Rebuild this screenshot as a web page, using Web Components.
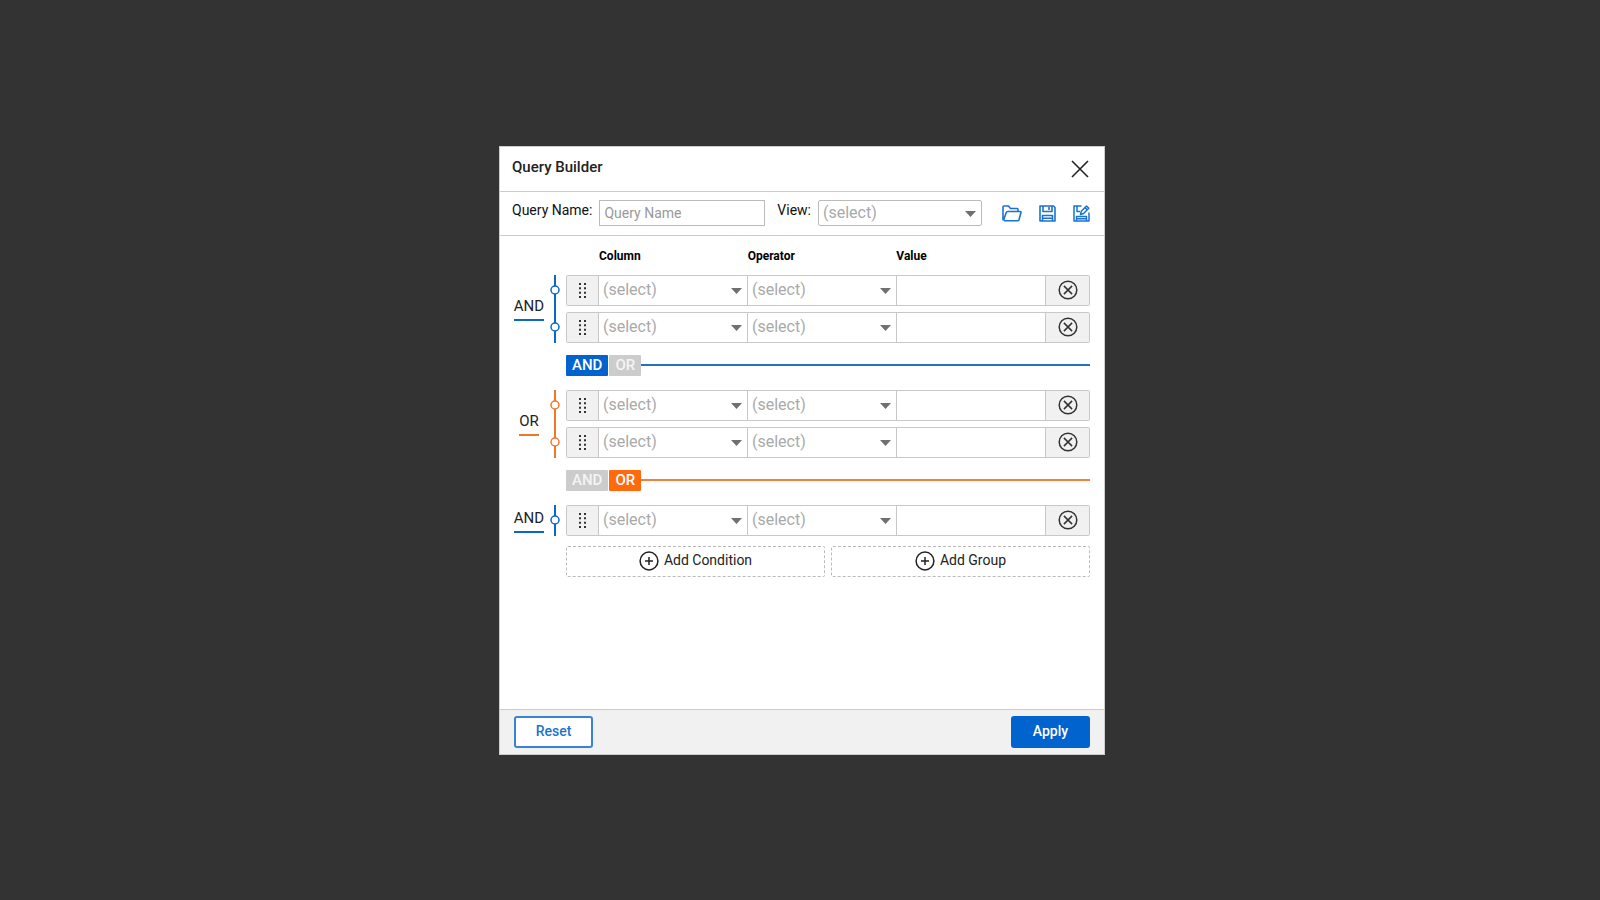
<!DOCTYPE html>
<html lang="en">
<head>
<meta charset="utf-8">
<meta name="viewport" content="width=device-width, initial-scale=1">
<title>Query Builder</title>
<style>
    body {
        margin: 0;
        background: #333;
        color: #222;
        font-family: Roboto, "Liberation Sans", sans-serif;
        font-size: 15px;
        line-height: 20px;
    }
</style>
</head>
<body>
<query-builder></query-builder>

<script>
const ICONS = {
    close: '<svg width="18" height="18" viewBox="0 0 18 18"><path d="M1 1l16 16M17 1L1 17" stroke-width="1.6"/></svg>',
    folder: '<svg width="20" height="17" viewBox="0 0 20 17"><path d="M1.500 15.500Q1 15 1 14.500V2q0-1 1-1h4.500l2 2.500H15q1 0 1 1V6.500M1.500 15.500L4.200 7.500q.4-1 1.400-1H18q1.200 0 .9 1.200L17 14.800q-.3 1-1.300 1H2" stroke-width="1.6"/></svg>',
    save: '<svg width="17" height="17" viewBox="0 0 17 17"><path d="M1 1h13.500L16 2.500V16H1zM4 1v5.500h9V1M10 2v3M3.500 16v-5.500h10V16M3.500 13.300h10" stroke-width="1.6"/></svg>',
    edit: '<svg width="17" height="17" viewBox="0 0 17 17"><path d="M8.500 1H1v15h15V7.500M4 1v5.500h3M3.500 16v-4.500h10V16M3.500 13.700h10M7.500 9.500l.8-3.300L13.500 1l2.300 2.300-5.200 5.200zM12 2.600l2.300 2.300" stroke-width="1.5"/></svg>',
    remove: '<svg width="20" height="20" viewBox="0 0 20 20"><circle cx="10" cy="10" r="8.800"/><path d="M5.900 5.900l8.200 8.200M14.100 5.900l-8.200 8.200"/></svg>',
    add: '<svg width="20" height="20" viewBox="0 0 20 20"><circle cx="10" cy="10" r="8.900"/><path d="M10 6v8M6 10h8"/></svg>',
    grip: '<svg width="7" height="15" viewBox="0 0 7 15"><path d="M1 0v15M6 0v15" stroke-width="2" stroke-dasharray="2 2.330"/></svg>',
    node: '<svg width="10" height="10" viewBox="0 0 10 10"><circle cx="5" cy="5" r="4" fill="#fff"/></svg>'
};

class QbIcon extends HTMLElement {
    constructor() {
        super();
        this.attachShadow({ mode: 'open' });
    }

    connectedCallback() {
        this.shadowRoot.innerHTML = `
            <style>
                :host { display: inline-flex; flex: none; }
                svg { display: block; fill: none; stroke: currentColor; stroke-width: 1.5; stroke-linejoin: round; }
            </style>
            ${ICONS[this.getAttribute('name')] || ''}
        `;
    }
}

class QbSelect extends HTMLElement {
    constructor() {
        super();
        this.attachShadow({ mode: 'open' });
    }

    connectedCallback() {
        const label = this.getAttribute('label');
        this.shadowRoot.innerHTML = `
            <style>
                :host {
                    display: grid;
                    grid-template-columns: 1fr 20px;
                    align-items: center;
                    min-width: 0;
                    box-sizing: border-box;
                }

                select {
                    grid-area: 1 / 1 / 2 / 3;
                    appearance: none;
                    width: 100%;
                    height: 100%;
                    margin: 0;
                    padding: 0 20px 0 4px;
                    border: none;
                    background: transparent;
                    color: #aaa;
                    font: inherit;
                    font-size: 16px;
                }

                svg {
                    grid-area: 1 / 2;
                    fill: #707070;
                    pointer-events: none;
                    margin-left: 4px;
                    margin-top: 2px;
                }
            </style>
            <select aria-label="${label}"><option>(select)</option></select>
            <svg width="11" height="6" viewBox="0 0 11 6"><path d="M0 0h11L5.500 6z"/></svg>
        `;
    }
}

class QbCondition extends HTMLElement {
    constructor() {
        super();
        this.attachShadow({ mode: 'open' });
    }

    connectedCallback() {
        this.shadowRoot.innerHTML = `
            <style>
                :host {
                    display: grid;
                    grid-template-columns: 31px 1fr 1fr 1fr 44px;
                    height: 31px;
                    box-sizing: border-box;
                    border: 1px solid #c8c8c8;
                    border-radius: 2px;
                    color: #333;
                }

                button {
                    display: grid;
                    place-items: center;
                    margin: 0;
                    padding: 0;
                    border: none;
                    background: #f1f1f1;
                    color: inherit;
                    cursor: pointer;
                }

                qb-select, input, .remove {
                    border: none;
                    border-left: 1px solid #c8c8c8;
                }

                input {
                    min-width: 0;
                    margin: 0;
                    padding: 0 4px;
                    font: inherit;
                }
            </style>
            <button class="grip" aria-label="Move condition"><qb-icon name="grip"></qb-icon></button>
            <qb-select label="Column"></qb-select>
            <qb-select label="Operator"></qb-select>
            <input type="text" aria-label="Value">
            <button class="remove" aria-label="Remove condition"><qb-icon name="remove"></qb-icon></button>
        `;

        this.shadowRoot.querySelector('.remove').addEventListener('click', () => this.remove());
    }
}

class QbGroup extends HTMLElement {
    constructor() {
        super();
        this.attachShadow({ mode: 'open' });
    }

    connectedCallback() {
        const nodes = '<qb-icon name="node"></qb-icon>'.repeat(this.children.length);
        this.shadowRoot.innerHTML = `
            <style>
                :host {
                    --tone: #0b68c8;
                    display: grid;
                    grid-template-columns: 30px 22px 1fr;
                }

                :host([type="OR"]) {
                    --tone: #f0772b;
                }

                .name {
                    place-self: center;
                    padding-bottom: 3px;
                    border-bottom: 2px solid var(--tone);
                }

                .rail, .rows {
                    display: flex;
                    flex-direction: column;
                    gap: 6px;
                }

                .rail {
                    align-items: center;
                    background: linear-gradient(var(--tone), var(--tone)) center / 2px 100% no-repeat;
                    color: var(--tone);
                }

                .rail qb-icon {
                    height: 31px;
                    align-items: center;
                }
            </style>
            <span class="name">${this.getAttribute('type')}</span>
            <div class="rail">${nodes}</div>
            <div class="rows"><slot></slot></div>
        `;
    }
}

class QbJoin extends HTMLElement {
    constructor() {
        super();
        this.attachShadow({ mode: 'open' });
    }

    connectedCallback() {
        this.shadowRoot.innerHTML = `
            <style>
                :host {
                    --tone: #0063ce;
                    --line: #2272bd;
                    display: flex;
                    align-items: center;
                    margin: 12px 0 14px 52px;
                }

                :host([value="OR"]) {
                    --tone: #ff6a0c;
                    --line: #f0813c;
                }

                button {
                    height: 21px;
                    margin: 0 1px 0 0;
                    padding: 0 6px;
                    border: none;
                    border-radius: 1px;
                    background: #ccc;
                    color: #f4f4f4;
                    font: inherit;
                    font-weight: 500;
                    line-height: 20px;
                    cursor: pointer;
                }

                button:last-of-type {
                    margin-right: 0;
                }

                button[aria-pressed="true"] {
                    background: var(--tone);
                    color: #fff;
                }

                hr {
                    flex: 1;
                    height: 2px;
                    margin: 0;
                    border: none;
                    background: var(--line);
                }
            </style>
            <button>AND</button>
            <button>OR</button>
            <hr>
        `;

        this.shadowRoot.querySelectorAll('button').forEach(button => {
            button.addEventListener('click', () => {
                this.setAttribute('value', button.textContent);
                this.update();
            });
        });
        this.update();
    }

    update() {
        this.shadowRoot.querySelectorAll('button').forEach(button => {
            button.setAttribute('aria-pressed', button.textContent === this.getAttribute('value'));
        });
    }
}

class QueryBuilder extends HTMLElement {
    constructor() {
        super();
        this.attachShadow({ mode: 'open' });
    }

    connectedCallback() {
        this.shadowRoot.innerHTML = `
            <style>
                :host {
                    display: grid;
                    place-items: center;
                    min-height: 100vh;
                    box-sizing: border-box;
                    padding-left: 4px;
                }

                .dialog {
                    display: flex;
                    flex-direction: column;
                    box-sizing: border-box;
                    width: 100%;
                    max-width: 606px;
                    min-height: 609px;
                    border: 1px solid #ccc;
                    background: #fff;
                }

                header, .toolbar, footer {
                    display: flex;
                    align-items: center;
                    box-sizing: border-box;
                    height: 45px;
                    padding: 0 14px;
                }

                header, .toolbar {
                    padding-left: 12px;
                    border-bottom: 1px solid #ccc;
                }

                header {
                    justify-content: space-between;
                }

                h1 {
                    margin: 0;
                    padding-bottom: 4px;
                    font-size: 15px;
                    font-weight: 500;
                }

                button {
                    display: flex;
                    align-items: center;
                    justify-content: center;
                    margin: 0;
                    padding: 0;
                    border: none;
                    background: transparent;
                    color: inherit;
                    font: inherit;
                    cursor: pointer;
                }

                header button {
                    padding: 0 1px;
                }

                .toolbar {
                    height: 44px;
                    color: #111;
                }

                label {
                    padding-bottom: 6px;
                    font-size: 14px;
                }

                #name {
                    box-sizing: border-box;
                    flex: 1;
                    min-width: 0;
                    height: 26px;
                    margin: 0 12px 0 7px;
                    padding: 0 4px;
                    border: 1px solid #bbb;
                    font: inherit;
                    font-size: 14px;
                }

                #name::placeholder {
                    color: #999;
                }

                .toolbar qb-select {
                    width: 164px;
                    height: 26px;
                    margin: 0 20px 0 7px;
                    border: 1px solid #bbb;
                    border-radius: 2px;
                }

                .tools {
                    display: flex;
                    gap: 17px;
                    color: #1a73d0;
                }

                main {
                    flex: 1;
                    padding: 13px 14px;
                }

                .headings {
                    display: grid;
                    grid-template-columns: 1fr 1fr 1fr;
                    margin: 0 45px 12px 85px;
                    color: #000;
                    font-size: 12px;
                    font-weight: 700;
                    line-height: 14px;
                }

                .add {
                    display: grid;
                    grid-template-columns: 1fr 1fr;
                    gap: 6px;
                    margin: 10px 0 0 52px;
                }

                .add button {
                    gap: 5px;
                    height: 31px;
                    border: 1px dashed #bbb;
                    border-radius: 2px;
                    font-size: 14px;
                }

                .add span {
                    padding-bottom: 2px;
                }

                footer {
                    justify-content: space-between;
                    border-top: 1px solid #ccc;
                    background: #f1f1f1;
                }

                footer button {
                    box-sizing: border-box;
                    width: 79px;
                    height: 32px;
                    padding-bottom: 2px;
                    border: 2px solid #3a82d2;
                    border-radius: 3px;
                    background: #fff;
                    color: #1a73d0;
                    font-size: 14px;
                    font-weight: 500;
                }

                footer .apply {
                    border-color: #0063ce;
                    background: #0063ce;
                    color: #fff;
                }
            </style>
            <section class="dialog" role="dialog" aria-labelledby="title">
                <header>
                    <h1 id="title">Query Builder</h1>
                    <button aria-label="Close"><qb-icon name="close"></qb-icon></button>
                </header>
                <div class="toolbar">
                    <label for="name">Query Name:</label>
                    <input id="name" type="text" placeholder="Query Name">
                    <label for="view">View:</label>
                    <qb-select id="view" label="View"></qb-select>
                    <div class="tools">
                        <button aria-label="Open query"><qb-icon name="folder"></qb-icon></button>
                        <button aria-label="Save query"><qb-icon name="save"></qb-icon></button>
                        <button aria-label="Save query as"><qb-icon name="edit"></qb-icon></button>
                    </div>
                </div>
                <main>
                    <div class="headings">
                        <span>Column</span>
                        <span>Operator</span>
                        <span>Value</span>
                    </div>
                    <qb-group type="AND">
                        <qb-condition></qb-condition>
                        <qb-condition></qb-condition>
                    </qb-group>
                    <qb-join value="AND"></qb-join>
                    <qb-group type="OR">
                        <qb-condition></qb-condition>
                        <qb-condition></qb-condition>
                    </qb-group>
                    <qb-join value="OR"></qb-join>
                    <qb-group type="AND">
                        <qb-condition></qb-condition>
                    </qb-group>
                    <div class="add">
                        <button><qb-icon name="add"></qb-icon><span>Add Condition</span></button>
                        <button><qb-icon name="add"></qb-icon><span>Add Group</span></button>
                    </div>
                </main>
                <footer>
                    <button class="reset">Reset</button>
                    <button class="apply">Apply</button>
                </footer>
            </section>
        `;
    }
}

customElements.define('qb-icon', QbIcon);
customElements.define('qb-select', QbSelect);
customElements.define('qb-condition', QbCondition);
customElements.define('qb-group', QbGroup);
customElements.define('qb-join', QbJoin);
customElements.define('query-builder', QueryBuilder);
</script>
</body>
</html>
